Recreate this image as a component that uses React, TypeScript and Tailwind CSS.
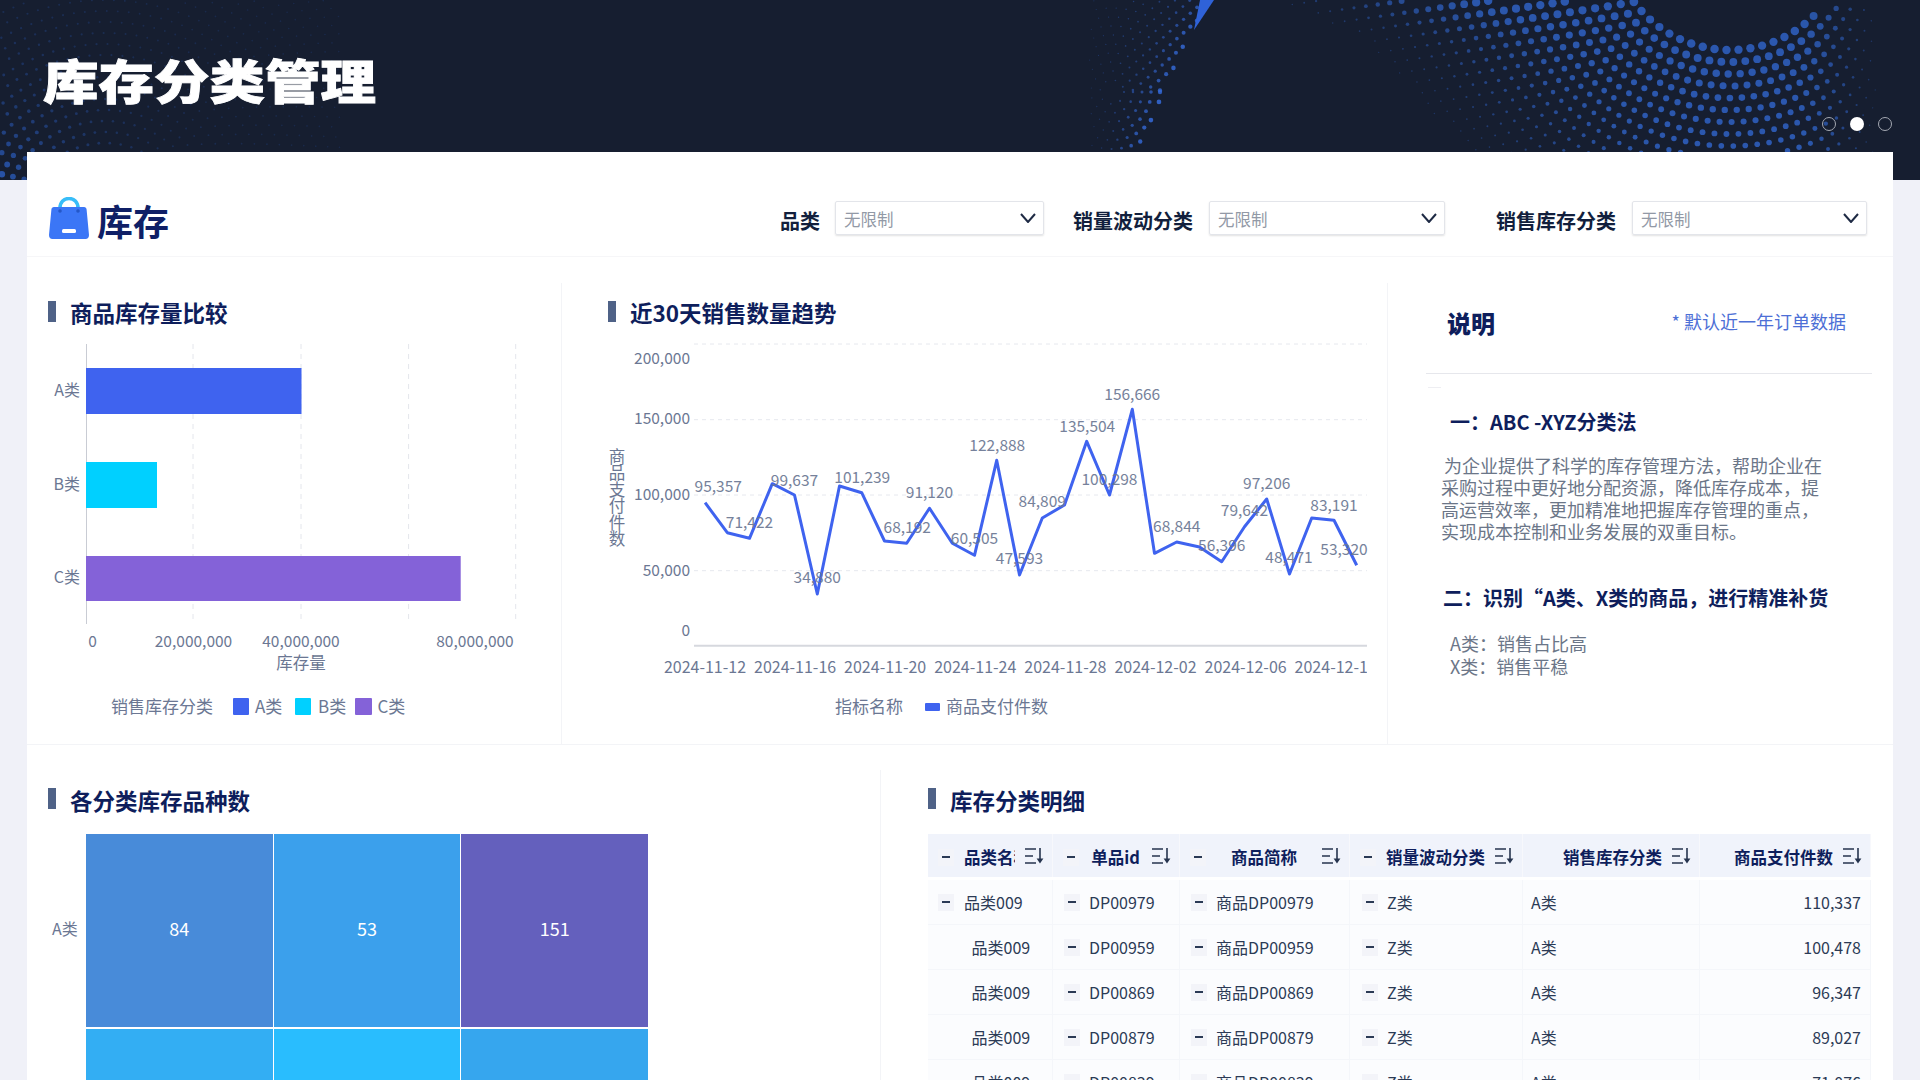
import React from "react";

type Dot = { x: number; y: number; r: number; o: number };

const sm = (a: number, b: number, v: number) => {
  const t = Math.min(1, Math.max(0, (v - a) / (b - a)));
  return t * t * (3 - 2 * t);
};
const interp = (pts: number[][], v: number) => {
  if (v <= pts[0][0]) return pts[0][1];
  for (let i = 1; i < pts.length; i++) {
    if (v <= pts[i][0]) {
      const [a, b] = pts[i - 1];
      const [c, d] = pts[i];
      return b + ((d - b) * (v - a)) / (c - a);
    }
  }
  return pts[pts.length - 1][1];
};

function rightDots(): Dot[] {
  const out: Dot[] = [];
  const cx = 1730, cy = -70;
  const edge = [[1620, -5], [1650, 7], [1690, 38], [1717, 43], [1757, 38], [1807, 20], [1840, 0], [1900, -30]];
  const left = [[0, 1250], [40, 1340], [100, 1395], [152, 1440]];
  for (let r = 60; r < 620; r += 12) {
    const step = 12 / r;
    for (let a = 0; a < Math.PI; a += step) {
      const x = cx + r * Math.cos(a);
      const y = cy + r * Math.sin(a);
      if (y < 0 || y > 153 || x > 1900 || x < 1240) continue;
      const e = interp(edge, x);
      if (y < e) continue;
      const d = y - e;
      const lf = sm(interp(left, y), interp(left, y) + 250, x);
      const rf = 1 - sm(1795, 1885, x);
      const f = lf * rf;
      if (f < 0.03) continue;
      out.push({ x, y, r: 0.6 + 3.8 * f * (0.4 + 0.6 * Math.exp(-d / 90)), o: 0.35 + 0.5 * f });
    }
  }
  return out;
}

function midDots(): Dot[] {
  const out: Dot[] = [];
  const cx = 1112, cy = 92;
  const edge = [[0, 1213], [30, 1193], [60, 1180], [85, 1167], [125, 1150], [152, 1140]];
  for (let r = 12; r < 125; r += 9) {
    const step = 10 / r;
    for (let a = 0; a < Math.PI * 2; a += step) {
      const x = cx + r * Math.cos(a);
      const y = cy + r * Math.sin(a);
      if (y < 0 || y > 152) continue;
      const e = interp(edge, y);
      if (x > e) continue;
      const near = Math.exp(-(e - x) / 32);
      const f = sm(1082, 1135, x);
      if (f < 0.05) continue;
      out.push({ x, y, r: 0.6 + 1.8 * near * f, o: 0.25 + 0.65 * Math.max(near, 0.25) * f });
    }
  }
  return out;
}

function leftDots(): Dot[] {
  const out: Dot[] = [];
  const cx = 105, cy = 225;
  for (let r = 60; r < 400; r += 11) {
    const step = 11 / r;
    for (let a = Math.PI * 0.75; a < Math.PI * 2; a += step) {
      const x = cx + r * Math.cos(a);
      const y = cy + r * Math.sin(a);
      if (y < 0 || y > 181 || x < 0 || x > 340) continue;
      const dist = Math.hypot(x, 175 - y);
      const s = Math.exp(-dist / 75);
      out.push({ x, y, r: 0.8 + 2.5 * s, o: 0.18 + 0.72 * s });
    }
  }
  return out;
}

const HeaderArt = () => {
  const right = rightDots();
  const mid = midDots();
  const left = leftDots();
  return (
    <svg className="absolute left-0 top-0" width="1920" height="180" viewBox="0 0 1920 180">
      {left.map((d, i) => (
        <circle key={`l${i}`} cx={d.x} cy={d.y} r={d.r} fill="#2a5ab8" opacity={d.o} />
      ))}
      {mid.map((d, i) => (
        <circle key={`m${i}`} cx={d.x} cy={d.y} r={d.r} fill="#3468d4" opacity={d.o} />
      ))}
      {right.map((d, i) => (
        <circle key={`r${i}`} cx={d.x} cy={d.y} r={d.r} fill="#2f62c4" opacity={d.o} />
      ))}
      <path d="M1214 0 L1194 30 L1200 0 Z" fill="#2f62d8" />
    </svg>
  );
};

const BagIcon = () => (
  <svg width="40" height="42" viewBox="0 0 40 42">
    <path d="M11 14 V11 C11 5 15 1.5 20 1.5 C25 1.5 29 5 29 11 V14" fill="none" stroke="#38bdf8" strokeWidth="3.5" />
    <path d="M5 10 H35 C36.5 10 37.5 11 37.6 12.5 L40 38 C40 40.4 38.6 42 36.6 42 H3.4 C1.4 42 0 40.4 0 38 L2.4 12.5 C2.5 11 3.5 10 5 10 Z" fill="#3b76f6" />
    <circle cx="11" cy="14" r="1.8" fill="#2457c8" />
    <circle cx="29" cy="14" r="1.8" fill="#2457c8" />
    <rect x="13" y="32" width="14" height="4" rx="1.5" fill="#ffffff" />
  </svg>
);

const Chevron = () => (
  <svg width="16" height="10" viewBox="0 0 16 10" className="shrink-0">
    <path d="M1 1 L8 9 L15 1" fill="none" stroke="#1e2a44" strokeWidth="2" />
  </svg>
);

const SortIcon = () => (
  <svg width="19" height="16" viewBox="0 0 19 16" className="shrink-0 -translate-y-[1px]">
    <path d="M0 1 H11 M0 8 H8 M0 15 H11" stroke="#26344f" strokeWidth="1.6" />
    <path d="M15 0 V14" stroke="#26344f" strokeWidth="1.6" />
    <path d="M11.6 10.5 L15 15.5 L18.4 10.5 Z" fill="#26344f" />
  </svg>
);

const Minus = () => (
  <span className="flex h-[17px] w-[16px] shrink-0 items-center justify-center bg-[#f3f4f9]">
    <span className="h-[2px] w-[8px] bg-[#2b3a55]" />
  </span>
);

const SectionTitle = ({ text, gap, textShift }: { text: string; gap: string; textShift: string }) => (
  <div className={`flex h-[24px] items-center ${gap}`}>
    <span className="h-[21px] w-[8px] -translate-y-[2px] bg-[#4f6287]" />
    <span className={`text-[22.5px] leading-[24px] font-bold text-[#0e1e5c] ${textShift}`}>{text}</span>
  </div>
);

const Filter = ({ label, w, ml, gap }: { label: string; w: string; ml: string; gap: string }) => (
  <div className={`flex items-start ${ml} ${gap}`}>
    <span className="mt-[5px] text-[20px] leading-[30px] font-bold text-[#121f3d]">{label}</span>
    <div className={`flex h-[34px] items-center justify-between rounded-[2px] border border-[#e3e5ea] pr-[7px] pl-[8px] shadow-[0_1px_2px_rgba(0,0,0,0.12)] ${w}`}>
      <span className="translate-y-[1px] text-[16.5px] text-[#9299a6]">无限制</span>
      <Chevron />
    </div>
  </div>
);

const GRAY = "#6b7793";

const BarChart = () => {
  const grid = [193, 301, 408.6, 515.7];
  return (
    <svg width="534" height="400" viewBox="27 335 534 400" className="block">
      <line x1="86.5" y1="344" x2="86.5" y2="624" stroke="#c9ccd4" strokeWidth="1" />
      {grid.map((x) => (
        <line key={x} x1={x} y1="344" x2={x} y2="624" stroke="#e4e6ec" strokeWidth="1" strokeDasharray="5 5" />
      ))}
      <rect x="86" y="368" width="215.5" height="46" fill="#3f63ef" />
      <rect x="86" y="462" width="71" height="46" fill="#00d0ff" />
      <rect x="86" y="556" width="374.7" height="45" fill="#8462d8" />
      <g fontSize="16" fill={GRAY} textAnchor="end">
        <text x="80" y="396">A类</text>
        <text x="80" y="490">B类</text>
        <text x="80" y="583">C类</text>
      </g>
      <g fontSize="15.5" fill={GRAY} textAnchor="middle">
        <text x="92.5" y="647">0</text>
        <text x="193.5" y="647">20,000,000</text>
        <text x="301" y="647">40,000,000</text>
        <text x="475" y="647">80,000,000</text>
        <text x="301" y="669" fontSize="16.5">库存量</text>
      </g>
      <g fontSize="17" fill={GRAY}>
        <text x="111" y="713">销售库存分类</text>
        <rect x="233" y="698" width="16" height="17" rx="1" fill="#3f63ef" />
        <text x="255" y="713">A类</text>
        <rect x="295" y="698" width="16" height="17" rx="1" fill="#00d0ff" />
        <text x="318" y="713">B类</text>
        <rect x="355" y="698" width="17" height="17" rx="1" fill="#8462d8" />
        <text x="377.5" y="713">C类</text>
      </g>
    </svg>
  );
};

const zx = (X: number) => 560 + X / 1.889;
const zy = (Y: number) => 280 + Y / 3;

const linePts = [
  [274, 668], [316, 758], [358, 775], [401, 611], [443, 645], [486, 942], [528, 618], [570, 638], [613, 783], [655, 790],
  [698, 685], [741, 790], [783, 826], [825, 541], [868, 885], [911, 714], [953, 675], [995, 484], [1038, 645], [1081, 388],
  [1123, 820], [1165, 786], [1208, 801], [1250, 845], [1293, 740], [1335, 657], [1378, 882], [1420, 714], [1462, 721], [1505, 856],
];

const lineLabels: [string, number, number][] = [
  ["95,357", 299, 620], ["71,422", 358, 728], ["99,637", 443, 600], ["34,880", 486, 893], ["101,239", 571, 593],
  ["68,192", 656, 742], ["91,120", 698, 638], ["60,505", 783, 776], ["122,888", 826, 495], ["47,593", 868, 836],
  ["84,809", 911, 665], ["135,504", 996, 438], ["100,298", 1038, 597], ["156,666", 1081, 342], ["68,844", 1165, 740],
  ["56,396", 1250, 795], ["79,642", 1293, 690], ["97,206", 1335, 611], ["48,471", 1377, 832], ["83,191", 1462, 675],
  ["53,320", 1481, 808],
];

const dates = ["2024-11-12", "2024-11-16", "2024-11-20", "2024-11-24", "2024-11-28", "2024-12-02", "2024-12-06", "2024-12-10"];

const LineChart = () => (
  <svg width="826" height="400" viewBox="561 335 826 400" className="block">
    <defs>
      <clipPath id="plotClip">
        <rect x="640" y="335" width="727" height="400" />
      </clipPath>
    </defs>
    {[344, 419.7, 495, 570.7].map((y) => (
      <line key={y} x1="694" y1={y} x2="1367" y2={y} stroke="#e6e8ee" strokeWidth="1" strokeDasharray="4 4" />
    ))}
    <line x1="694" y1="645.7" x2="1367" y2="645.7" stroke="#d6d8de" strokeWidth="2" />
    <g fontSize="15.5" fill={GRAY} textAnchor="end">
      <text x="690" y="364">200,000</text>
      <text x="690" y="424">150,000</text>
      <text x="690" y="500">100,000</text>
      <text x="690" y="576">50,000</text>
      <text x="690" y="636">0</text>
    </g>
    <text x="617" y="448" fontSize="16.5" fill={GRAY} className="[writing-mode:vertical-rl]">商品支付件数</text>
    <polyline
      points={linePts.map(([X, Y]) => `${zx(X).toFixed(1)},${zy(Y).toFixed(1)}`).join(" ")}
      fill="none"
      stroke="#3f63ef"
      strokeWidth="3"
      strokeLinejoin="round"
    />
    <g fontSize="15.5" fill={GRAY} textAnchor="middle" opacity="0.92">
      {lineLabels.map(([t, X, Y]) => (
        <text key={t} x={zx(X)} y={zy(Y) + 5.5}>{t}</text>
      ))}
    </g>
    <g fontSize="16" fill={GRAY} textAnchor="middle" clipPath="url(#plotClip)">
      {dates.map((d, i) => (
        <text key={d} x={705 + i * 90.1} y="673">{d}</text>
      ))}
    </g>
    <g fontSize="17" fill={GRAY}>
      <text x="835" y="713">指标名称</text>
      <rect x="925" y="703" width="15" height="8" rx="1" fill="#3f63ef" />
      <text x="946" y="713">商品支付件数</text>
    </g>
  </svg>
);

const heat = [
  { v: "84", c: "bg-[#488bd9]" },
  { v: "53", c: "bg-[#3ba0ec]" },
  { v: "151", c: "bg-[#6460bd]" },
  { v: "", c: "bg-[#33aef3]" },
  { v: "", c: "bg-[#29bdfe]" },
  { v: "", c: "bg-[#36a6ee]" },
];

const cols = "grid grid-cols-[125px_127px_170px_173px_177px_171px]";

const Head = ({ label, minus, align }: { label: string; minus?: boolean; align?: boolean }) => (
  <div className={`flex h-[43px] items-center border-r border-[#f7f8fc] pt-[3px] pr-2 pl-[10px] ${align ? "justify-end" : ""}`}>
    {minus && <Minus />}
    <span className={`mx-[10px] min-w-0 overflow-hidden text-[16.5px] leading-[24px] font-bold whitespace-nowrap text-[#0e1e5c] ${align ? "" : "flex-1 text-center"}`}>{label}</span>
    <SortIcon />
  </div>
);

const rows = [
  ["DP00979", "商品DP00979", "110,337"],
  ["DP00959", "商品DP00959", "100,478"],
  ["DP00869", "商品DP00869", "96,347"],
  ["DP00879", "商品DP00879", "89,027"],
  ["DP00839", "商品DP00839", "71,076"],
];

const cell = "flex h-[45px] items-center border-r border-b border-[#f4f6fa] bg-[#fbfcfe] text-[16px] text-[#2b3a55]";

const Table = () => (
  <div className="mt-[22px] w-[943px]">
    <div className={`${cols} mb-[3px] bg-[#f0f3fb]`}>
      <Head label="品类名称" minus />
      <Head label="单品id" minus />
      <Head label="商品简称" minus />
      <Head label="销量波动分类" minus />
      <Head label="销售库存分类" align />
      <Head label="商品支付件数" align />
    </div>
    {rows.map((r, i) => (
      <div key={r[0]} className={cols}>
        <div className={`${cell} ${i === 0 ? "gap-[10px] pl-[10px]" : "pl-[43.5px]"}`}>
          {i === 0 && <Minus />}
          <span>品类009</span>
        </div>
        <div className={`${cell} gap-[9px] pl-[11px]`}>
          <Minus />
          <span>{r[0]}</span>
        </div>
        <div className={`${cell} gap-[9px] pl-[11px]`}>
          <Minus />
          <span>{r[1]}</span>
        </div>
        <div className={`${cell} gap-[9px] pl-[12px]`}>
          <Minus />
          <span>Z类</span>
        </div>
        <div className={`${cell} pl-[8px]`}>A类</div>
        <div className={`${cell} justify-end pr-[9px]`}>{r[2]}</div>
      </div>
    ))}
  </div>
);

export default function App() {
  return (
    <div className="h-[1080px] w-[1920px] overflow-hidden bg-[#f0f1f8] font-['Noto_Sans_CJK_SC','Noto_Sans',sans-serif]">
      <header className="relative h-[180px] overflow-hidden bg-[#161e30]">
        <HeaderArt />
        <div className="relative flex justify-between pr-[28px] pl-[43px]">
          <h1 className="mt-[38px] origin-center scale-y-[0.84] text-[55.5px] leading-[80px] font-black whitespace-nowrap text-white [-webkit-text-stroke:1px_white]">库存分类管理</h1>
          <div className="mt-[117px] flex h-[14px] items-center gap-[14px]">
            <span className="h-[14px] w-[14px] rounded-full border border-[#a4a8b2]" />
            <span className="h-[14px] w-[14px] rounded-full bg-white" />
            <span className="h-[14px] w-[14px] rounded-full border border-[#a4a8b2]" />
          </div>
        </div>
      </header>
      <main className="relative mx-[27px] -mt-[28px] h-[928px] bg-white">
        <section className="flex h-[105px] items-start border-b border-[#f6f6f8] pt-[45px] pl-[22px]">
          <BagIcon />
          <span className="mt-[-3px] ml-[8px] text-[36px] leading-[52px] font-bold text-[#0f1f66]">库存</span>
          <div className="ml-auto flex items-start pt-[4px]">
            <Filter label="品类" w="w-[209px]" ml="" gap="gap-[15px]" />
            <Filter label="销量波动分类" w="w-[236px]" ml="ml-[29px]" gap="gap-[16px]" />
            <Filter label="销售库存分类" w="w-[235px]" ml="ml-[51px]" gap="gap-[16px]" />
            <div className="w-[26px]" />
          </div>
        </section>

        <section className="flex h-[488px] border-b border-[#f3f4f7]">
          <div className="w-[534px] shrink-0 pt-[44px] pl-[21px]">
            <SectionTitle text="商品库存量比较" gap="gap-[14px]" textShift="-translate-y-[1px]" />
            <div className="mt-[10px] -ml-[21px]">
              <BarChart />
            </div>
          </div>
          <div className="mt-[26px] w-[826px] shrink-0 border-l border-[#f3f4f7]">
            <div className="pt-[18px] pl-[46px]">
              <SectionTitle text="近30天销售数量趋势" gap="gap-[14px]" textShift="-translate-y-[1px]" />
            </div>
            <div className="mt-[10px] -ml-px">
              <LineChart />
            </div>
          </div>
          <div className="mt-[26px] flex-1 border-l border-[#f3f4f7]">
            <div className="flex items-start justify-between pt-[24px] pr-[47px] pl-[59px]">
              <span className="text-[24px] leading-[32px] font-black text-[#0e1e5c]">说明</span>
              <span className="text-[18px] leading-[28px] text-[#4d6fd6]">* 默认近一年订单数据</span>
            </div>
            <div className="mt-[34px] mr-[21px] ml-[38px] h-px bg-[#e6e7ec]" />
            <div className="mt-[13px] ml-[40px] h-px w-[13px] bg-[#eeeef2]" />
            <h3 className="mt-[20px] ml-[62px] text-[20px] leading-[28px] font-bold text-[#0e1e5c]">一：ABC -XYZ分类法</h3>
            <p className="mt-[18px] ml-[53px] w-[420px] indent-[3px] text-[18px] leading-[22px] text-[#6b7688]">
              为企业提供了科学的库存管理方法，帮助企业在
              <br />
              采购过程中更好地分配资源，降低库存成本，提
              <br />
              高运营效率，更加精准地把握库存管理的重点，
              <br />
              实现成本控制和业务发展的双重目标。
            </p>
            <h3 className="mt-[42px] ml-[55px] text-[20px] leading-[28px] font-bold text-[#0e1e5c]">二：识别“A类、X类的商品，进行精准补货</h3>
            <p className="mt-[20px] ml-[62px] text-[18px] leading-[23px] text-[#6b7688]">
              A类：销售占比高
              <br />
              X类：销售平稳
            </p>
          </div>
        </section>

        <section className="flex flex-1">
          <div className="w-[853px] shrink-0 pt-[43px] pl-[21px]">
            <SectionTitle text="各分类库存品种数" gap="gap-[14px]" textShift="" />
            <div className="mt-[22px] flex items-start">
              <div className="flex h-[187px] w-[38px] items-center text-[16px] text-[#6b7793]">
                <span className="ml-[4px]">A类</span>
              </div>
              <div className="grid w-[562px] grid-cols-3 gap-x-[1px] gap-y-[2px]">
                {heat.map((h, i) => (
                  <div key={i} className={`flex h-[193px] items-center justify-center pb-[5px] text-[18px] text-white ${h.c}`}>
                    {h.v}
                  </div>
                ))}
              </div>
            </div>
          </div>
          <div className="mt-[25px] flex-1 border-l border-[#f3f4f7] pt-[18px] pl-[47px]">
            <SectionTitle text="库存分类明细" gap="gap-[14px]" textShift="" />
            <Table />
          </div>
        </section>
      </main>
    </div>
  );
}
